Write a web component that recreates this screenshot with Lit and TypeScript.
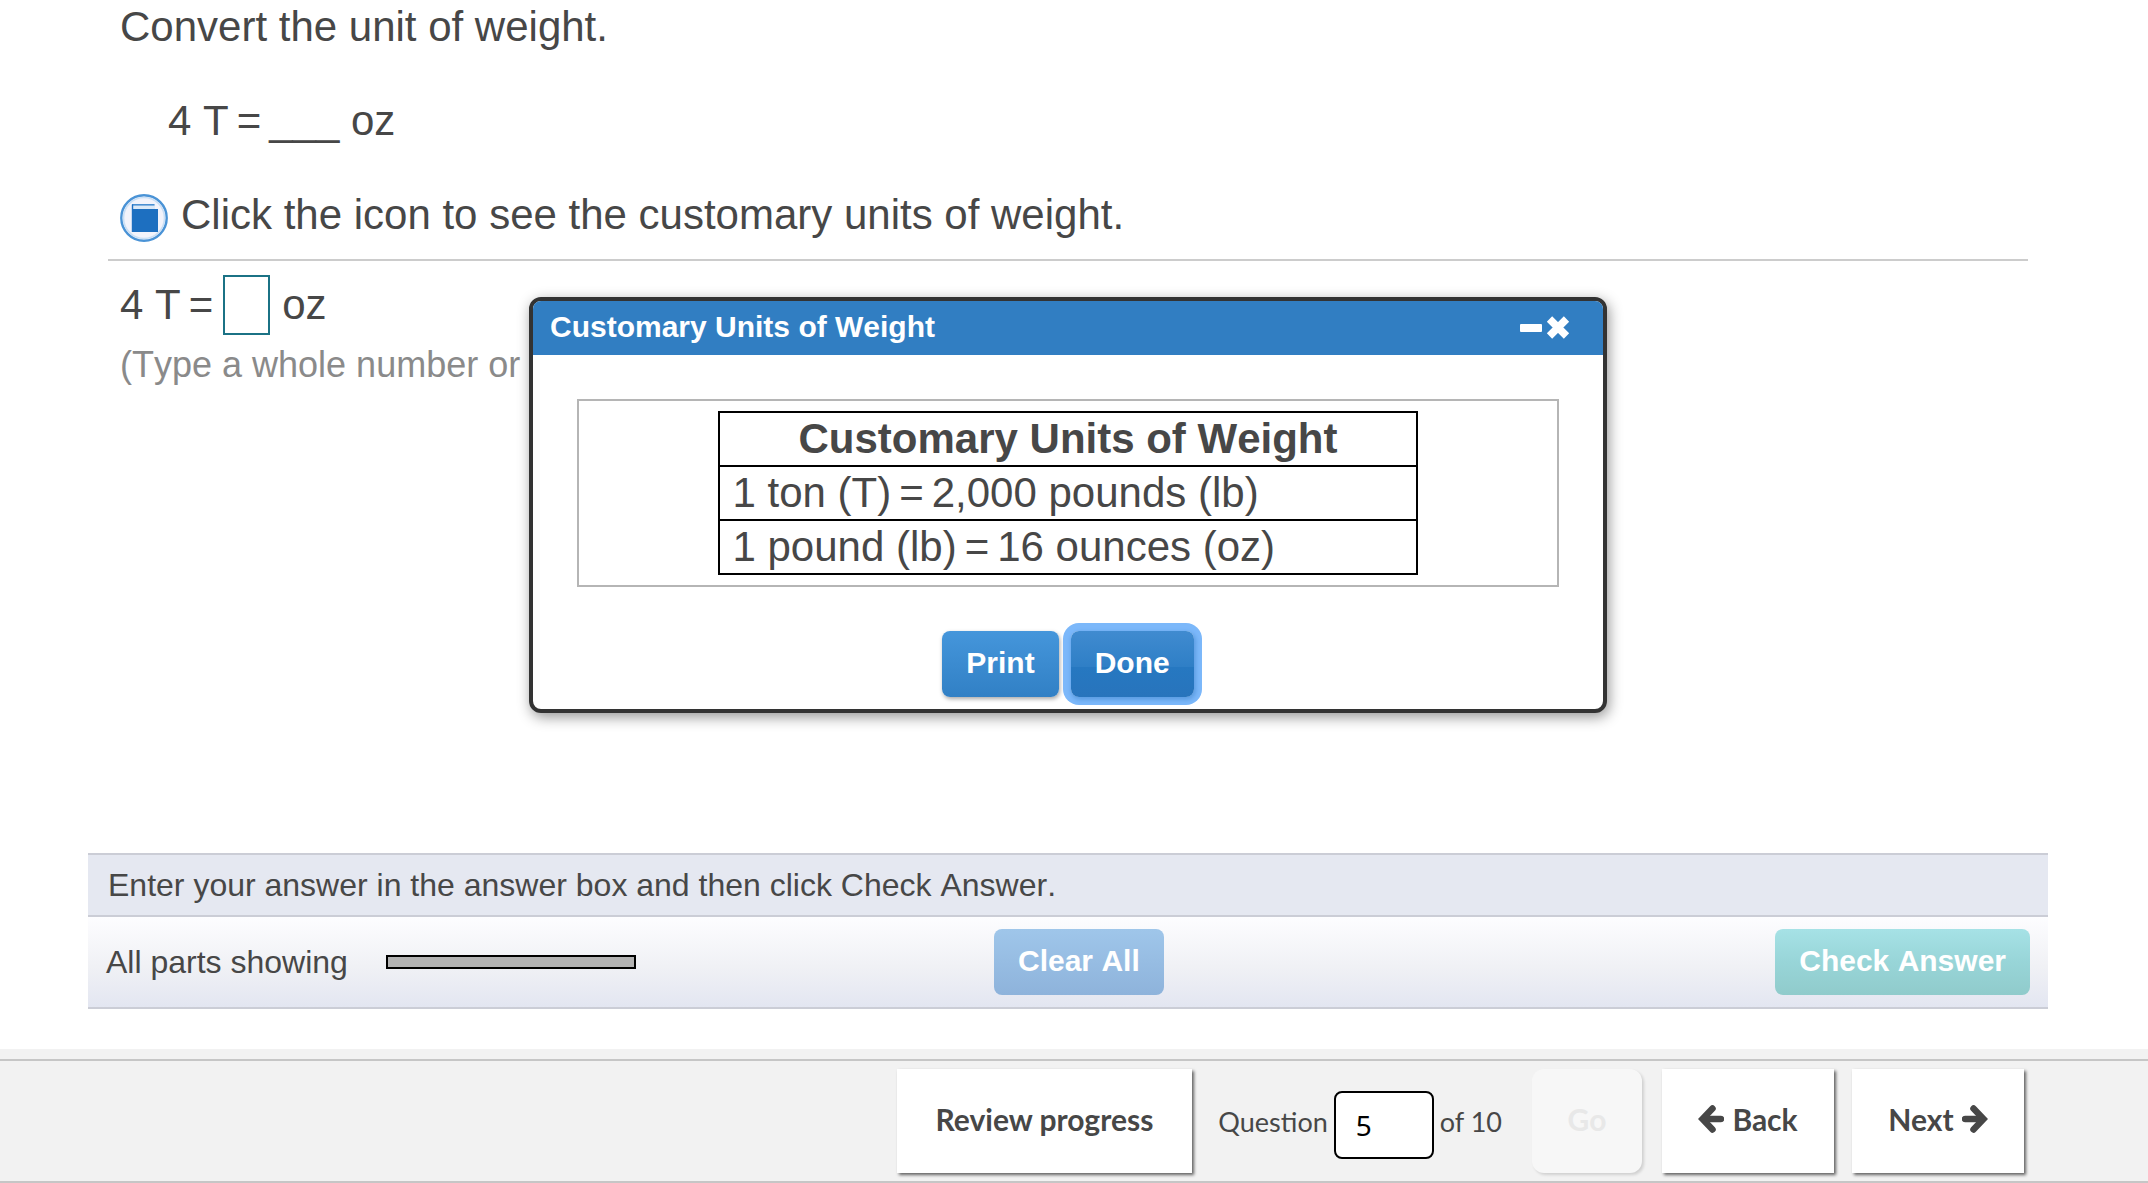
import { LitElement, html, css } from "lit";
import { customElement, property, state } from "lit/decorators.js";

/** Floating reference window with the conversion table. */
@customElement("units-dialog")
export class UnitsDialog extends LitElement {
  @property() heading = "";
  @property({ attribute: false }) rows: [string, string][] = [];

  static styles = css`
    :host {
      display: block;
      box-sizing: border-box;
      overflow: hidden;
      border: 4px solid #333;
      border-radius: 12px;
      background: #fff;
      box-shadow: 2px 4px 14px rgba(0, 0, 0, 0.42);
      color: #474747;
      font-family: "Liberation Sans", Arial, sans-serif;
      font-kerning: none;
    }
    .header {
      display: flex;
      align-items: center;
      justify-content: space-between;
      height: 54px;
      padding: 0 33px 0 17px;
      background: #317ec2;
      color: #fff;
    }
    .title {
      margin: 0;
      font-size: 30px;
      line-height: 52px;
      font-weight: 700;
      padding-bottom: 2px;
    }
    .tools {
      display: flex;
      gap: 4px;
    }
    .tool {
      display: block;
      border: 0;
      padding: 0;
      background: none;
      color: inherit;
      line-height: 0;
    }
    .body {
      padding: 44px 44px 12px;
    }
    .frame {
      display: flex;
      justify-content: center;
      padding: 10px;
      border: 2px solid #b5b5b5;
    }
    table {
      border-collapse: collapse;
      font-size: 42px;
      line-height: 52px;
    }
    th,
    td {
      border: 2px solid #000;
      text-align: left;
      padding: 0 12px;
    }
    th {
      padding: 0 78px;
      text-align: center;
      white-space: nowrap;
    }
    .eq {
      margin: 0 8px;
    }
    .actions {
      display: flex;
      justify-content: center;
      gap: 12px;
      margin-top: 44px;
    }
    .btn {
      border: 0;
      border-radius: 8px;
      padding: 14px 24px 16px;
      background: linear-gradient(#4596db, #3180c5);
      box-shadow: 1px 2px 4px rgba(0, 0, 0, 0.35);
      color: #fff;
      font: 700 30px/36px "Liberation Sans", Arial, sans-serif;
      font-kerning: none;
    }
    .btn.primary {
      outline: none;
      background: linear-gradient(#408bd0, #2f7fc6 54%, #2678c1 55%, #2874bc);
      box-shadow: 1px 2px 4px 1px #5c9de2, 0 0 0 8px #7cb8fa;
    }
  `;

  render() {
    return html`
      <header class="header">
        <h2 class="title">${this.heading}</h2>
        <div class="tools">
          <button class="tool" aria-label="Minimize">
            <svg width="22" height="24" viewBox="0 0 22 24"><rect y="8" width="22" height="8" rx="1" fill="currentColor" /></svg>
          </button>
          <button class="tool" aria-label="Close">
            <svg width="24" height="24" viewBox="0 0 24 24">
              <path d="M3.500 3l17 17M20.500 3l-17 17" stroke="currentColor" stroke-width="7.500" />
            </svg>
          </button>
        </div>
      </header>
      <div class="body">
        <div class="frame">
          <table>
            <thead>
              <tr><th scope="col">${this.heading}</th></tr>
            </thead>
            <tbody>
              ${this.rows.map(
                ([from, to]) => html`<tr><td>${from}<span class="eq">=</span>${to}</td></tr>`
              )}
            </tbody>
          </table>
        </div>
        <div class="actions">
          <button class="btn">Print</button>
          <button class="btn primary">Done</button>
        </div>
      </div>
    `;
  }
}

@customElement("app-root")
export class AppRoot extends LitElement {
  @state() private question = 5;
  private total = 10;
  private units: [string, string][] = [
    ["1 ton (T)", "2,000 pounds (lb)"],
    ["1 pound (lb)", "16 ounces (oz)"],
  ];

  static styles = css`
    :host {
      display: flex;
      flex-direction: column;
      min-height: 100vh;
      background: #fff;
      color: #474747;
      font-family: "Liberation Sans", Arial, sans-serif;
    }
    .stage {
      position: relative;
      display: flex;
      flex: 1;
      flex-direction: column;
      justify-content: space-between;
      margin: 0 100px 40px 88px;
      font-kerning: none;
    }
    .problem {
      padding: 0 20px;
    }
    .prompt {
      display: flex;
      flex-direction: column;
      gap: 40px;
      padding: 0 12px 17px;
      border-bottom: 2px solid #ccc;
      font-size: 42px;
      line-height: 54px;
    }
    .line {
      margin: 0;
    }
    .indent {
      padding-left: 48px;
    }
    .eq {
      margin: 0 8px;
    }
    .hintline {
      display: flex;
      align-items: flex-end;
      gap: 13px;
    }
    .book {
      display: block;
      border: 0;
      padding: 0;
      background: none;
      line-height: 0;
    }
    .answer {
      padding: 14px 12px 0;
      font-size: 42px;
      line-height: 60px;
    }
    .entry {
      display: flex;
      align-items: center;
    }
    .blank {
      box-sizing: border-box;
      width: 47px;
      height: 60px;
      margin: 0 12px 0 2px;
      border: 2px solid #1b7285;
      padding: 0 4px;
      background: #fff;
      font: inherit;
    }
    .note {
      margin: 9px 0 0;
      color: #8a8a8a;
      font-size: 36px;
      line-height: 42px;
    }
    .popup {
      position: absolute;
      top: 297px;
      left: 0;
      right: 0;
      width: 55%;
      margin: 0 auto;
    }
    .panel {
      border-bottom: 2px solid #cbcdd6;
      font-size: 32px;
    }
    .instruction {
      margin: 0;
      padding: 0 20px;
      border: solid #cbcdd6;
      border-width: 2px 0;
      background: #e5e8f1;
      line-height: 60px;
    }
    .controls {
      display: grid;
      grid-template-columns: 6fr 7fr;
      align-items: center;
      height: 90px;
      padding: 0 18px;
      background: linear-gradient(#fdfdff, #f0f1f5 55%, #e3e6f1);
    }
    .status {
      display: flex;
      align-items: center;
      gap: 38px;
    }
    .meter {
      box-sizing: border-box;
      width: 250px;
      height: 14px;
      border: 2px solid #000;
      background: #b3b3b3;
    }
    .buttons {
      display: flex;
      justify-content: space-between;
    }
    .btn {
      border: 0;
      border-radius: 8px;
      padding: 14px 24px 16px;
      color: #fff;
      font: 700 30px/36px "Liberation Sans", Arial, sans-serif;
      font-kerning: none;
    }
    .clear {
      background: linear-gradient(#9fc6ea, #8eb3db);
    }
    .check {
      background: linear-gradient(#a6e2e6, #98d5d8 50%, #90cbcb);
    }
    .footer {
      padding-top: 10px;
      background: #f2f2f2;
    }
    .nav {
      display: flex;
      justify-content: flex-end;
      align-items: center;
      gap: 18px;
      padding: 8px 124px 8px 0;
      border: solid #c6c6c6;
      border-width: 2px 0;
      font-family: Lato, sans-serif;
      font-size: 27px;
    }
    .navbtn {
      display: flex;
      align-items: center;
      justify-content: center;
      gap: 8px;
      min-width: 172px;
      height: 104px;
      border: 0;
      padding: 0 39px 4px;
      background: #fff;
      box-shadow: 2px 2px 3px rgba(0, 0, 0, 0.6);
      color: #474747;
      font: 700 30px/36px Lato, sans-serif;
    }
    .navbtn.step {
      padding: 0 36px 4px;
    }
    .navbtn.go {
      min-width: 110px;
      margin-right: 2px;
      border-radius: 12px;
      padding: 0 32px 4px;
      background: #f7f7f7;
      box-shadow: 2px 2px 3px rgba(0, 0, 0, 0.14);
      color: #e8e8e8;
    }
    .jump {
      display: flex;
      align-items: center;
      gap: 6px;
      padding: 0 12px 0 8px;
    }
    .number {
      box-sizing: border-box;
      width: 100px;
      height: 68px;
      margin-top: 8px;
      border: 2px solid #000;
      border-radius: 8px;
      padding: 0 20px;
      background: #fff;
      color: #000;
      font: 400 28px/36px "Noto Sans", sans-serif;
    }
  `;

  render() {
    return html`
      <main class="stage">
        <section class="problem">
          <div class="prompt">
            <p class="line">Convert the unit of weight.</p>
            <p class="line indent">4 T<span class="eq">=</span>___ oz</p>
            <div class="hintline">
              <button class="book" aria-label="Customary units of weight">
                <svg width="48" height="48" viewBox="0 0 48 48">
                  <circle cx="24" cy="24" r="22.7" fill="#f2f3fb" stroke="#4a93d6" stroke-width="2.4" />
                  <circle cx="24" cy="24" r="20.5" fill="none" stroke="#c9dff5" stroke-width="1.6" />
                  <path d="M12 10h23v6H12z" fill="#dbe9f8" />
                  <path d="M12 10.8h22.500" stroke="#4a8fd2" stroke-width="1.6" />
                  <path d="M11.800 10.500h1.400V15H38v23H11.800z" fill="#1d6fc0" />
                </svg>
              </button>
              <p class="line">Click the icon to see the customary units of weight.</p>
            </div>
          </div>
          <div class="answer">
            <div class="entry">
              <label for="answer">4 T<span class="eq">=</span></label>
              <input class="blank" id="answer" type="text" autocomplete="off" />
              <span>oz</span>
            </div>
            <p class="note">(Type a whole number or a</p>
          </div>
        </section>

        <units-dialog
          class="popup"
          role="dialog"
          aria-label="Customary Units of Weight"
          .heading=${"Customary Units of Weight"}
          .rows=${this.units}
        ></units-dialog>

        <section class="panel">
          <p class="instruction">Enter your answer in the answer box and then click Check Answer.</p>
          <div class="controls">
            <div class="status">
              <span>All parts showing</span>
              <div class="meter"></div>
            </div>
            <div class="buttons">
              <button class="btn clear">Clear All</button>
              <button class="btn check">Check Answer</button>
            </div>
          </div>
        </section>
      </main>

      <footer class="footer">
        <nav class="nav">
          <button class="navbtn">Review progress</button>
          <div class="jump">
            <label for="question">Question</label>
            <input class="number" id="question" type="text" .value=${String(this.question)} />
            <span>of ${this.total}</span>
          </div>
          <button class="navbtn go" disabled>Go</button>
          <button class="navbtn step">
            <svg width="26" height="28" viewBox="0 0 26 28" fill="none" stroke="currentColor" stroke-width="6.500">
              <path d="M14.500 3.500L4.500 14l10 10.500" stroke-linecap="round" stroke-linejoin="miter" />
              <path d="M6 14h17" stroke-linecap="round" />
            </svg>
            Back
          </button>
          <button class="navbtn step">
            Next
            <svg width="26" height="28" viewBox="0 0 26 28" fill="none" stroke="currentColor" stroke-width="6.500">
              <path d="M11.500 3.500L21.500 14l-10 10.500" stroke-linecap="round" stroke-linejoin="miter" />
              <path d="M20 14H3" stroke-linecap="round" />
            </svg>
          </button>
        </nav>
      </footer>
    `;
  }
}
